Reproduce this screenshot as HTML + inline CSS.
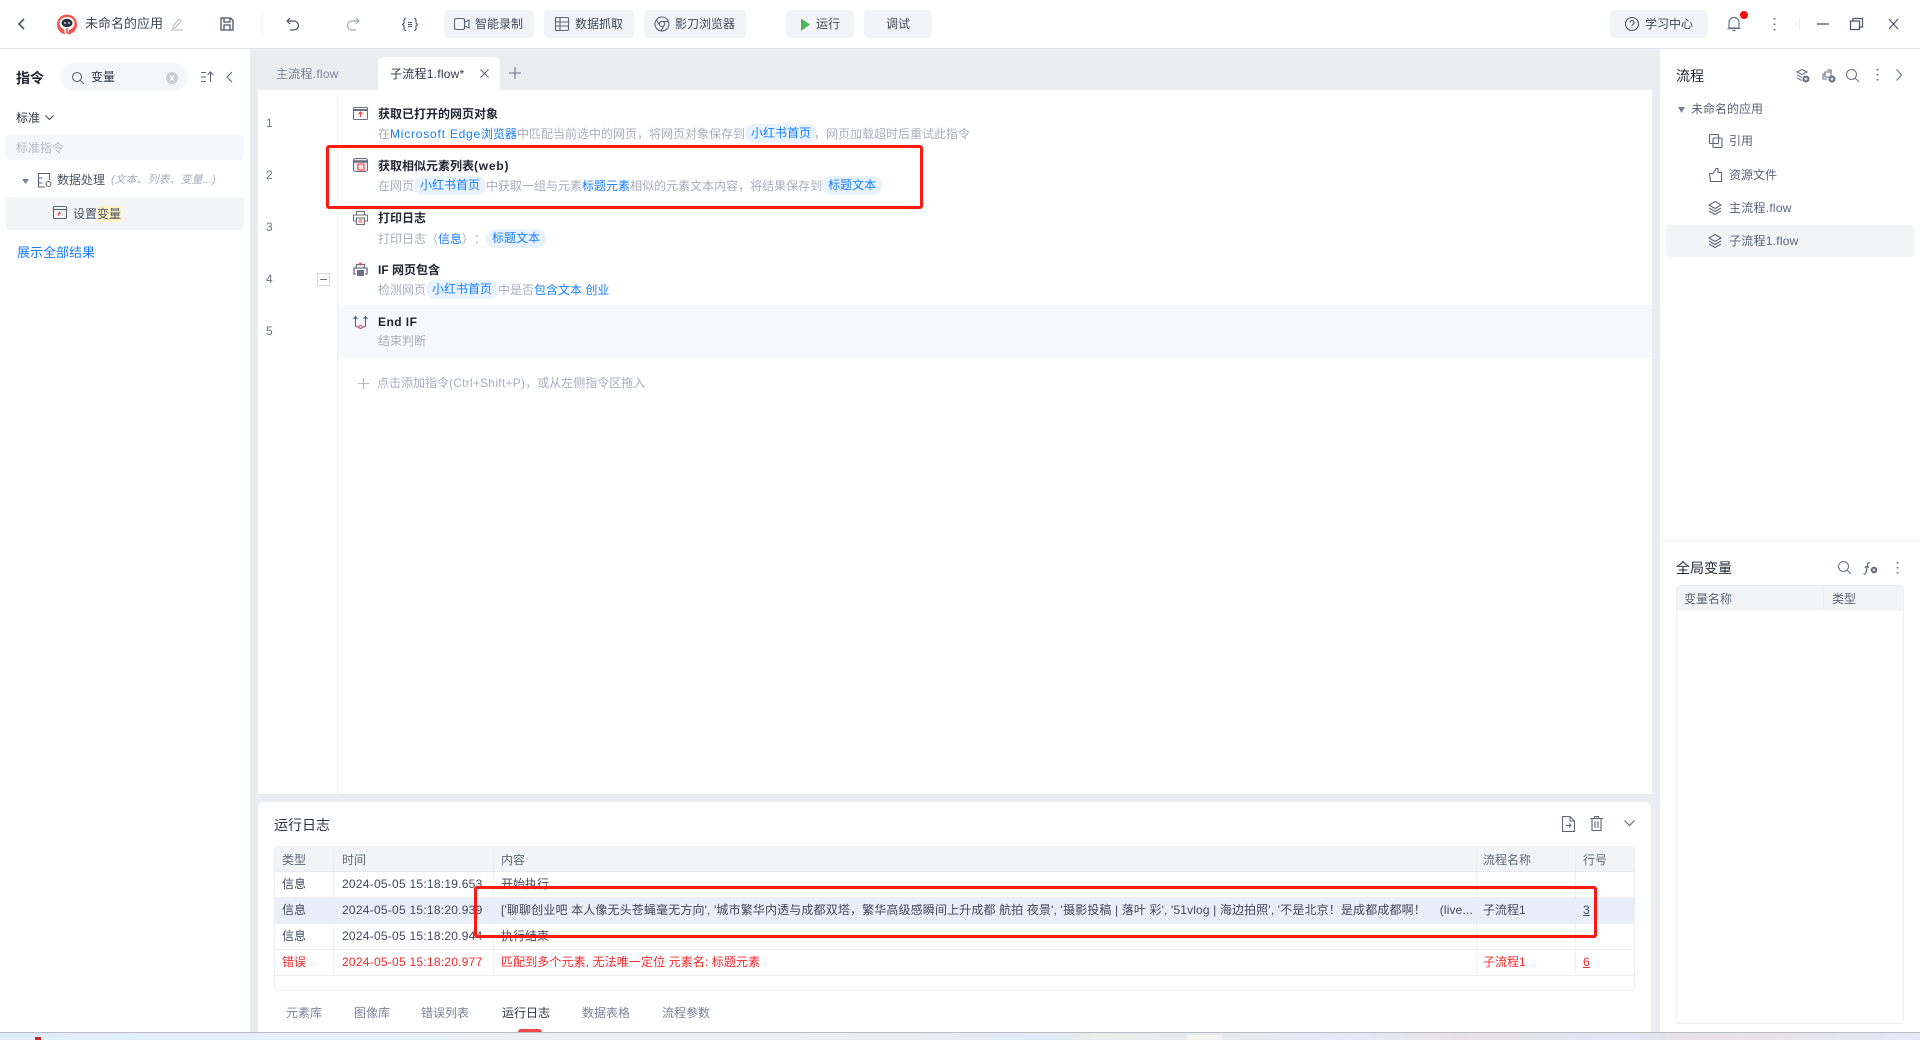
<!DOCTYPE html>
<html lang="zh"><head><meta charset="utf-8"><title>影刀</title>
<style>
*{box-sizing:border-box}
html,body{margin:0;padding:0;width:1920px;height:1040px;overflow:hidden;background:#fff}
body{position:relative;font:12px/1 "Liberation Sans","Noto Sans CJK SC",sans-serif;color:#40485a;text-spacing-trim:space-all}
.a{position:absolute}
.t{position:absolute;white-space:nowrap;line-height:16px;height:16px}
.l{letter-spacing:.25px}
.m{letter-spacing:.78px}
svg{position:absolute;overflow:visible;fill:none;stroke:#5d6678;stroke-width:1.1}
.btn{position:absolute;top:10px;height:28px;background:#f3f4f7;border-radius:4px;color:#40485a;line-height:29px;white-space:nowrap}
.ttl{font-weight:bold;color:#1f2430;left:378px}
.sub{left:378px;color:#a9aeba;height:20px;line-height:20px}
.sub b{font-weight:normal;color:#1a7dff}
.chip{display:inline-block;background:#e9f3fe;color:#1a7dff;border-radius:9px;height:19px;line-height:19px;padding:0 6px;vertical-align:top}
.no{left:266px;color:#6f7685;font-size:12px}
.cell{color:#40485a}
.err{color:#f5282b}
.btab{top:1005px;color:#7a8499}
.h{background:#fff5c4}
</style></head><body>

<!-- background panels -->
<div class="a" style="left:0;top:48px;width:1920px;height:984px;background:#ebedf1;border-top:1px solid #e3e5ec"></div>
<div class="a" style="left:0;top:49px;width:250px;height:983px;background:#fff"></div>
<div class="a" style="left:258px;top:90px;width:1394px;height:704px;background:#fff"></div>
<div class="a" style="left:258px;top:802px;width:1393px;height:230px;background:#fff;border-radius:6px 6px 0 0"></div>
<div class="a" style="left:1660px;top:49px;width:260px;height:983px;background:#fff"></div>
<div class="a" style="left:0;top:1032px;width:1920px;height:8px;background:linear-gradient(90deg,#e2eef6,#e6f0f8 20%,#eef0f0 40%,#e2ebf6 55%,#e9efe9 57%,#e3e9f5 70%,#e8e2e8 76%,#e0e6f4 85%,#ebdfe6 88%,#e2e9f4);border-top:1px solid #b9bcc0"></div>
<div class="a" style="left:35px;top:1037px;width:6px;height:3px;background:#c22a2a"></div>
<div class="a" style="left:1187px;top:1035px;width:36px;height:5px;background:#f4f5f2;border-radius:2px 2px 0 0"></div>

<!-- top bar -->
<svg style="left:17px;top:17px" width="10" height="14"><path d="M7 2 2 7l5 5" stroke="#3d4556" stroke-width="1.5"/></svg>
<svg style="left:56px;top:14px" width="22" height="22" viewBox="0 0 22 22"><circle cx="11" cy="10.500" r="10" fill="#f4534c" stroke="none"/><ellipse cx="11" cy="9.500" rx="7.500" ry="6.500" fill="#fff" stroke="none"/><path d="M8 15h5l-1 6H9z" fill="#fff" stroke="none"/><path d="M11 14v4q0 2 3 1" stroke="#f4534c" stroke-width="1.500"/><ellipse cx="11" cy="9" rx="5.500" ry="4.200" fill="#2c3140" stroke="none"/><circle cx="9" cy="9" r=".9" fill="#fff" stroke="none"/><circle cx="13" cy="9" r=".9" fill="#fff" stroke="none"/></svg>
<div class="t" style="left:85px;top:16px;font-size:13px">未命名的应用</div>
<svg style="left:171px;top:17px" width="12" height="14"><path d="M2 9 8 2l2 2-6 7-2 .4zM0 13h12" stroke="#b6bac4"/></svg>
<svg style="left:220px;top:17px" width="14" height="14"><path d="M1 1h9.500L13 3.500V13H1zM4 1v4h6V1M4 13V8h6v5" stroke="#4a5366" stroke-width="1.300"/></svg>
<div class="a" style="left:261px;top:12px;width:1px;height:24px;background:#f0f1f4"></div>
<svg style="left:286px;top:17px" width="14" height="14"><path d="M4 1 1 4l3 3M1 4h7a4.500 4.500 0 0 1 0 9H4" stroke="#4a5366" stroke-width="1.200"/></svg>
<svg style="left:346px;top:17px" width="14" height="14"><path d="M10 1l3 3-3 3M13 4H6a4.500 4.500 0 0 0 0 9h4" stroke="#a4a9b5" stroke-width="1.200"/></svg>
<svg style="left:402px;top:18px" width="16" height="13"><path d="M4 .5Q2 .5 2 2.500v2.500L.5 6.500 2 8v2.500q0 2 2 2M12 .5q2 0 2 2v2.500L15.500 6.500 14 8v2.500q0 2-2 2M6 4.500h4M6 6.500h4M6 8.500h4" stroke="#4a5366"/></svg>

<div class="btn" style="left:444px;width:90px;padding-left:31px">智能录制</div>
<svg style="left:454px;top:18px" width="16" height="12"><rect x=".5" y=".5" width="10" height="11" rx="1.500"/><path d="M11 4l4-2v8l-4-2"/></svg>
<div class="btn" style="left:544px;width:90px;padding-left:31px">数据抓取</div>
<svg style="left:555px;top:17px" width="14" height="14"><rect x=".5" y=".5" width="13" height="13" rx="1"/><path d="M.5 5h13M.5 9h13M5 .5v13"/></svg>
<div class="btn" style="left:644px;width:102px;padding-left:31px">影刀浏览器</div>
<svg style="left:654px;top:16px" width="16" height="16"><circle cx="8" cy="8" r="7"/><circle cx="8" cy="8" r="2.600"/><path d="M8 5.400h6.500M5.800 9.500 2.500 4M10 9.800 7 15"/></svg>
<div class="btn" style="left:786px;width:68px;padding-left:30px">运行</div>
<svg style="left:800px;top:18px" width="11" height="14"><path d="M1 .5l9 6-9 6.500z" fill="#47b95b" stroke="none"/></svg>
<div class="btn" style="left:864px;width:68px;text-align:center">调试</div>

<div class="btn" style="left:1610px;width:98px;padding-left:35px">学习中心</div>
<svg style="left:1625px;top:17px" width="14" height="14"><circle cx="7" cy="7" r="6.500" stroke="#4a5366"/><path d="M5 5.500a2 2 0 1 1 3 1.700c-.8.5-1 .8-1 1.600M7 10.300v.8" stroke="#4a5366"/></svg>
<svg style="left:1727px;top:16px" width="14" height="16"><path d="M2 12V6.500a5 5 0 0 1 10 0V12zM0.500 12.500h13M5.500 14.500h3" stroke="#6a7385" stroke-width="1.200"/></svg>
<div class="a" style="left:1740px;top:11px;width:8px;height:8px;border-radius:50%;background:#f60a0a"></div>
<svg style="left:1773px;top:17px" width="3" height="14"><path d="M1.500 1v1.500M1.500 6.500V8M1.500 12v1.500" stroke="#6a7385" stroke-width="2"/></svg>
<div class="a" style="left:1799px;top:18px;width:1px;height:12px;background:#eceef2"></div>
<svg style="left:1817px;top:23px" width="12" height="2"><path d="M0 1h12" stroke="#4a5366" stroke-width="1.300"/></svg>
<svg style="left:1850px;top:18px" width="13" height="12"><path d="M.5 3h9v8.500h-9zM3 3V.5h9.500V9H10" stroke="#4a5366" stroke-width="1.200"/></svg>
<svg style="left:1888px;top:18px" width="11" height="12"><path d="M1 1l9 10M10 1 1 11" stroke="#4a5366" stroke-width="1.200"/></svg>

<!-- left panel -->
<div class="t" style="left:16px;top:70px;font-size:14px;font-weight:bold;color:#1f2430">指令</div>
<div class="a" style="left:60px;top:63px;width:128px;height:28px;border-radius:14px;background:#f5f6f9"></div>
<svg style="left:72px;top:72px" width="12" height="13"><circle cx="5" cy="5" r="4.500"/><path d="M8.500 8.500 12 12"/></svg>
<div class="t" style="left:91px;top:69px;color:#2f3644">变量</div>
<svg style="left:166px;top:72px" width="12" height="12"><circle cx="6" cy="6" r="6" fill="#c9ccd3" stroke="none"/><path d="M4 3.500l4 5M8 3.500l-4 5" stroke="#fff"/></svg>
<svg style="left:201px;top:71px" width="13" height="12"><path d="M0 1.500h5M0 6h5M0 10.500h5M9.500 11V1M6.500 4l3-3 3 3"/></svg>
<svg style="left:226px;top:71px" width="7" height="12"><path d="M6 1 1 6l5 5"/></svg>
<div class="t" style="left:16px;top:110px;color:#2f3644">标准</div>
<svg style="left:45px;top:115px" width="9" height="6"><path d="M.5.500l4 4 4-4" stroke="#3d4556"/></svg>
<div class="a" style="left:6px;top:135px;width:238px;height:25px;border-radius:4px;background:#f6f7fa"></div>
<div class="t" style="left:16px;top:140px;color:#b5bac6">标准指令</div>
<svg style="left:22px;top:179px" width="7" height="5"><path d="M0 0h7L3.500 5z" fill="#7a8293" stroke="none"/></svg>
<svg style="left:38px;top:173px" width="14" height="15"><path d="M7 14H.5V.5h11V7M.5 5h4M.5 10h4"/><circle cx="10.500" cy="11" r="2.500"/></svg>
<div class="t" style="left:57px;top:172px;color:#4b5364">数据处理</div>
<div class="t" style="left:111px;top:172px;color:#a9aeba;font-style:italic;font-size:11px">(文本、列表、变量...)</div>
<div class="a" style="left:6px;top:197px;width:238px;height:33px;border-radius:4px;background:#f3f4f6"></div>
<svg style="left:53px;top:206px" width="14" height="13"><rect x=".5" y=".5" width="13" height="12" rx="1"/><path d="M.5 3.500h13"/><path d="M5 10 7 5.500M5 7.500h3" stroke="#ef4a4a"/></svg>
<div class="t" style="left:73px;top:206px;color:#4b5364">设置<span class="h" style="display:inline-block">变量</span></div>
<div class="t" style="left:17px;top:245px;color:#1a7dff;font-size:13px">展示全部结果</div>

<!-- tabs -->
<div class="t l" style="left:276px;top:66px;color:#7a8499">主流程.flow</div>
<div class="a" style="left:378px;top:57px;width:122px;height:33px;background:#fff;border-radius:6px 6px 0 0"></div>
<div class="t l" style="left:390px;top:66px;color:#2f3644">子流程1.flow*</div>
<svg style="left:480px;top:69px" width="9" height="9"><path d="M.5.500l8 8M8.500.500l-8 8"/></svg>
<svg style="left:509px;top:67px" width="12" height="12"><path d="M6 0v12M0 6h12" stroke="#6a7385"/></svg>

<!-- editor -->
<div class="a" style="left:337px;top:97px;width:1px;height:697px;background:#eef0f3"></div>
<div class="a" style="left:338px;top:305px;width:1314px;height:52px;background:#f7f8fb"></div>

<div class="t no" style="top:115px">1</div>
<div class="t no" style="top:167px">2</div>
<div class="t no" style="top:219px">3</div>
<div class="t no" style="top:271px">4</div>
<div class="t no" style="top:323px">5</div>
<div class="a" style="left:317px;top:273px;width:13px;height:13px;border:1px solid #d5d8de"></div>
<div class="a" style="left:320px;top:279px;width:7px;height:1px;background:#6a7385"></div>

<svg style="left:353px;top:107px" width="15" height="13"><rect x=".5" y=".5" width="14" height="12" rx="1" stroke="#6a7080"/><path d="M.5 3h14" stroke="#6a7080" stroke-width="2"/><path d="M7.500 5v5M5.500 7l2-2 2 2" stroke="#ef4a4a" stroke-width="1.300"/></svg>
<svg style="left:353px;top:158px" width="15" height="14"><rect x=".5" y=".5" width="14" height="13" rx="2" fill="#eceef1" stroke="#6a7080"/><path d="M.5 3.500h14" stroke="#6a7080" stroke-width="2.500"/><rect x="5" y="6" width="6" height="6" fill="#fbe3e3" stroke="#ef4a4a"/></svg>
<svg style="left:353px;top:211px" width="15" height="14"><path d="M3.500 4V.5h8V4M3.500 10H.5V4h14v6h-3" stroke="#6a7080"/><rect x="3.500" y="7" width="8" height="6.500" stroke="#6a7080"/><path d="M5.500 9h4M5.500 11h4" stroke="#ef4a4a"/></svg>
<svg style="left:353px;top:263px" width="15" height="14"><path d="M3.500 5V1.500h8V5M3 11H1V5h13v6h-2" stroke="#6a7080" stroke-width="1.300"/><rect x="4" y="7" width="7" height="6" fill="#6a7080" stroke="none"/><circle cx="7.500" cy="1" r="1" stroke="#ef4a4a"/></svg>
<svg style="left:353px;top:315px" width="15" height="14"><path d="M2.500 2v8q0 2 2 2h1M12.500 2v8q0 2-2 2h-1M.5 4l2-2.500 2 2.500M10.500 4l2-2.500 2 2.500" stroke="#5a6274"/><circle cx="7.500" cy="12" r="1.500" stroke="#ef4a4a"/></svg>

<div class="t ttl" style="top:106px">获取已打开的网页对象</div>
<div class="t sub" style="top:124px">在<b class="m">Microsoft Edge</b><b>浏览器</b>中匹配当前选中的网页，将网页对象保存到<span class="chip" style="margin-right:-3px">小红书首页</span>，网页加载超时后重试此指令</div>
<div class="t ttl" style="top:158px">获取相似元素列表<span class="m">(web)</span></div>
<div class="t sub" style="top:176px">在网页<span class="chip">小红书首页</span>中获取一组与元素<b>标题元素</b>相似的元素文本内容，将结果保存到<span class="chip">标题文本</span></div>
<div class="t ttl" style="top:210px">打印日志</div>
<div class="t sub" style="top:229px">打印日志（<b>信息</b>）：<span class="chip">标题文本</span></div>
<div class="t ttl" style="top:262px">IF 网页包含</div>
<div class="t sub" style="top:280px">检测网页<span class="chip">小红书首页</span>中是否<b>包含文本 创业</b></div>
<div class="t ttl" style="top:314px"><span class="m" style="letter-spacing:.45px">End IF</span></div>
<div class="t sub" style="top:331px">结束判断</div>
<svg style="left:358px;top:378px" width="11" height="11"><path d="M5.500 0v11M0 5.500h11" stroke="#b5bac6"/></svg>
<div class="t" style="left:377px;top:375px;color:#a9aeba">点击添加指令<span class="l">(Ctrl+Shift+P)</span>，或从左侧指令区拖入</div>

<!-- log panel -->
<div class="t" style="left:274px;top:817px;font-size:14px;color:#2f3644">运行日志</div>
<svg style="left:1562px;top:816px" width="13" height="16"><path d="M8 .5H.5v15h12V5zM8 .5V5h4.500M4 9.500h5M7 7.500l2 2-2 2"/></svg>
<svg style="left:1590px;top:816px" width="13" height="15"><path d="M0 2.500h13M4.500 2.500V.5h4v2M2 2.500V14.500h9V2.500M5 5.500v6.500M8 5.500v6.500"/></svg>
<svg style="left:1624px;top:820px" width="11" height="7"><path d="M.5.500l5 5 5-5"/></svg>

<div class="a" style="left:274px;top:846px;width:1361px;height:145px;border:1px solid #eceef2;border-radius:4px"></div>
<div class="a" style="left:275px;top:847px;width:1359px;height:25px;background:#f3f4f6;border-bottom:1px solid #e9ebef"></div>
<div class="a" style="left:275px;top:897px;width:1359px;height:26px;background:#e9eff8"></div>
<div class="a" style="left:275px;top:897px;width:1359px;height:1px;background:#eceef2"></div>
<div class="a" style="left:275px;top:923px;width:1359px;height:1px;background:#eceef2"></div>
<div class="a" style="left:275px;top:949px;width:1359px;height:1px;background:#eceef2"></div>
<div class="a" style="left:275px;top:975px;width:1359px;height:1px;background:#eceef2"></div>
<div class="a" style="left:333px;top:847px;width:1px;height:129px;background:#eceef2"></div>
<div class="a" style="left:493px;top:847px;width:1px;height:129px;background:#eceef2"></div>
<div class="a" style="left:1476px;top:847px;width:1px;height:129px;background:#eceef2"></div>
<div class="a" style="left:1575px;top:847px;width:1px;height:129px;background:#eceef2"></div>

<div class="t cell" style="left:282px;top:852px;color:#5d6678">类型</div>
<div class="t cell" style="left:342px;top:852px;color:#5d6678">时间</div>
<div class="t cell" style="left:501px;top:852px;color:#5d6678">内容</div>
<div class="t cell" style="left:1483px;top:852px;color:#5d6678">流程名称</div>
<div class="t cell" style="left:1583px;top:852px;color:#5d6678">行号</div>

<div class="t cell" style="left:282px;top:876px">信息</div>
<div class="t cell l" style="left:342px;top:876px">2024-05-05 15:18:19.653</div>
<div class="t cell" style="left:501px;top:876px">开始执行...</div>

<div class="t cell" style="left:282px;top:902px">信息</div>
<div class="t cell l" style="left:342px;top:902px">2024-05-05 15:18:20.939</div>
<div class="t cell" style="left:501px;top:902px;width:972px;overflow:hidden;letter-spacing:.14px">['聊聊创业吧 本人像无头苍蝇毫无方向', '城市繁华内透与成都双塔，繁华高级感瞬间上升成都 航拍 夜景', '摄影投稿 | 落叶 彩', '51vlog | 海边拍照', '不是北京！是成都成都啊！&nbsp;&nbsp;&nbsp;&nbsp;(live...</div>
<div class="t cell" style="left:1483px;top:902px">子流程1</div>
<div class="t cell" style="left:1583px;top:902px;text-decoration:underline">3</div>

<div class="t cell" style="left:282px;top:928px">信息</div>
<div class="t cell l" style="left:342px;top:928px">2024-05-05 15:18:20.944</div>
<div class="t cell" style="left:501px;top:928px">执行结束</div>

<div class="t err" style="left:282px;top:954px">错误</div>
<div class="t err l" style="left:342px;top:954px">2024-05-05 15:18:20.977</div>
<div class="t err" style="left:501px;top:954px;letter-spacing:.1px">匹配到多个元素, 无法唯一定位 元素名: 标题元素</div>
<div class="t err" style="left:1483px;top:954px">子流程1</div>
<div class="t err" style="left:1583px;top:954px;text-decoration:underline">6</div>

<div class="t btab" style="left:286px">元素库</div>
<div class="t btab" style="left:354px">图像库</div>
<div class="t btab" style="left:421px">错误列表</div>
<div class="t btab" style="left:502px;color:#2f3644">运行日志</div>
<div class="t btab" style="left:582px">数据表格</div>
<div class="t btab" style="left:662px">流程参数</div>
<div class="a" style="left:518px;top:1029px;width:24px;height:3px;background:#f5484a;border-radius:3px 3px 0 0"></div>

<!-- right panel -->
<div class="t" style="left:1676px;top:68px;font-size:14px;color:#1f2430">流程</div>
<svg style="left:1796px;top:69px" width="14" height="14"><path d="M1 3l5-2.500L11 3 6 5.500zM1 6l5 2.500M1 9l5 2.500" stroke="#6a7385"/><circle cx="10" cy="10" r="3.500" fill="#6a7385" stroke="none"/><path d="M8.500 10h3M10 8.500v3" stroke="#fff"/></svg>
<svg style="left:1822px;top:69px" width="14" height="14"><path d="M3 3h6v5H3zM1 5h2M5 1h4v2M1 5v5h4" stroke="#6a7385"/><circle cx="10" cy="10" r="3.500" fill="#6a7385" stroke="none"/><path d="M8.500 10h3M10 8.500v3" stroke="#fff"/></svg>
<svg style="left:1846px;top:69px" width="13" height="13"><circle cx="5.500" cy="5.500" r="5" stroke="#6a7385"/><path d="M9 9l4 4" stroke="#6a7385"/></svg>
<svg style="left:1876px;top:69px" width="3" height="12"><path d="M1.500 0v1.500M1.500 5v1.500M1.500 10v1.500" stroke="#6a7385" stroke-width="1.800"/></svg>
<svg style="left:1896px;top:69px" width="6" height="12"><path d="M.5.500l5 5.500-5 5.500" stroke="#6a7385"/></svg>

<svg style="left:1678px;top:107px" width="7" height="6"><path d="M0 0h7L3.500 6z" fill="#7a8293" stroke="none"/></svg>
<div class="t" style="left:1691px;top:101px;color:#5a6478">未命名的应用</div>
<svg style="left:1709px;top:134px" width="14" height="14"><rect x=".5" y=".5" width="9" height="9" rx="1"/><rect x="4" y="4" width="9" height="9.500" rx="1"/></svg>
<div class="t" style="left:1729px;top:133px;color:#5a6478">引用</div>
<svg style="left:1709px;top:168px" width="13" height="14"><path d="M.5 5.500H4L7 .5h2v4h3.500v9H1.500z"/></svg>
<div class="t" style="left:1729px;top:167px;color:#5a6478">资源文件</div>
<svg style="left:1708px;top:201px" width="14" height="14"><path d="M7 .5 13 4 7 7.500 1 4zM1 7l6 3.500L13 7M1 10l6 3.500 6-3.500"/></svg>
<div class="t l" style="left:1729px;top:200px;color:#5a6478">主流程.flow</div>
<div class="a" style="left:1666px;top:225px;width:248px;height:32px;background:#f3f4f6;border-radius:4px"></div>
<svg style="left:1708px;top:234px" width="14" height="14"><path d="M7 .5 13 4 7 7.500 1 4zM1 7l6 3.500L13 7M1 10l6 3.500 6-3.500"/></svg>
<div class="t l" style="left:1729px;top:233px;color:#5a6478">子流程1.flow</div>

<div class="a" style="left:1660px;top:540px;width:260px;height:1px;background:#eef0f3"></div>
<div class="t" style="left:1676px;top:560px;font-size:14px;color:#1f2430">全局变量</div>
<svg style="left:1838px;top:561px" width="13" height="13"><circle cx="5.500" cy="5.500" r="5" stroke="#6a7385"/><path d="M9 9l4 4" stroke="#6a7385"/></svg>
<svg style="left:1863px;top:562px" width="15" height="13"><path d="M7 .7Q5 .2 4.500 2.500L3 10.500q-.5 2-2.500 1.500M1.500 5h4.500" stroke="#5a6274" stroke-width="1.200"/><circle cx="11" cy="8" r="3.200" fill="#5a6274" stroke="none"/><path d="M9.500 8h3M11 6.500v3" stroke="#fff" stroke-width=".9"/></svg>
<svg style="left:1896px;top:562px" width="3" height="12"><path d="M1.500 0v1.500M1.500 5v1.500M1.500 10v1.500" stroke="#6a7385" stroke-width="1.800"/></svg>
<div class="a" style="left:1676px;top:585px;width:228px;height:439px;border:1px solid #eceef2;border-radius:4px"></div>
<div class="a" style="left:1677px;top:586px;width:226px;height:24px;background:#f3f4f6;border-bottom:1px solid #e9ebef"></div>
<div class="a" style="left:1823px;top:586px;width:1px;height:24px;background:#e9ebef"></div>
<div class="t" style="left:1684px;top:591px;color:#5d6678">变量名称</div>
<div class="t" style="left:1832px;top:591px;color:#5d6678">类型</div>

<!-- red annotations -->
<div class="a" style="left:326px;top:145px;width:597px;height:64px;border:3px solid #fb1a12;border-radius:3px"></div>
<div class="a" style="left:474px;top:886px;width:1123px;height:52px;border:3px solid #fb1a12;border-radius:3px"></div>
</body></html>
